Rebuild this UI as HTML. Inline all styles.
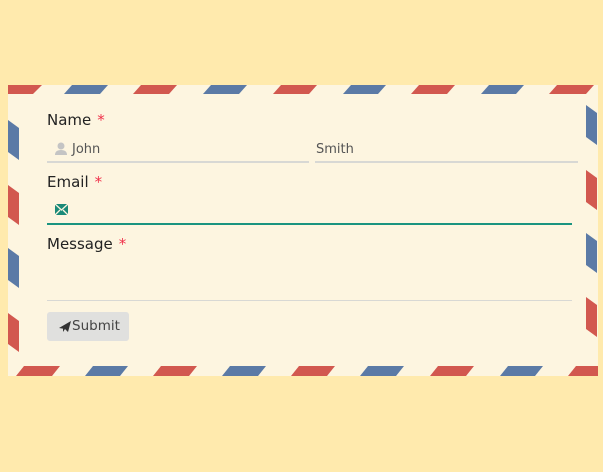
<!DOCTYPE html>
<html><head><meta charset="utf-8"><style>
*{margin:0;padding:0;box-sizing:border-box}
body{width:603px;height:472px;background:#ffeaad;position:relative;overflow:hidden;font-family:"DejaVu Sans","Liberation Sans",sans-serif}
#env{position:absolute;left:8px;top:85px;width:590px;height:291px;background:#fdf5e0}
svg.s{position:absolute;left:0;top:0}
.lbl{position:absolute;left:47px;font-size:15px;color:#222}
.lbl b{color:#f0304a;font-weight:normal;margin-left:6px}
.inp{position:absolute;font-size:13px;color:#555}
.line{position:absolute;height:1px;background:#d8d8d4}
.btn{position:absolute;left:47px;top:312px;width:82px;height:29px;background:#e0e0de;border-radius:3px;font-size:13.5px;color:#444;line-height:29px;padding-left:25px}
.btn svg{position:absolute;left:11px;top:8px}
</style></head><body>
<div id="env"></div>
<svg class="s" width="603" height="472">
<g fill="#d2584f">
<polygon points="8,85 42,85 33,94 8,94"/>
<polygon points="141,85 177,85 169,94 133,94"/>
<polygon points="281,85 317,85 309,94 273,94"/>
<polygon points="419,85 455,85 447,94 411,94"/>
<polygon points="557,85 594,85 586,94 549,94"/>
<polygon points="24,366 60,366 52,376 16,376"/>
<polygon points="161,366 197,366 189,376 153,376"/>
<polygon points="299,366 335,366 327,376 291,376"/>
<polygon points="438,366 474,366 466,376 430,376"/>
<polygon points="576,366 598,366 598,376 568,376"/>
<polygon points="8,185 19,193 19,225 8,217"/>
<polygon points="8,313 19,321 19,352 8,344"/>
<polygon points="586,170 597,178 597,210 586,202"/>
<polygon points="586,297 597,305 597,337 586,329"/>
</g>
<g fill="#5b7aa6">
<polygon points="72,85 108,85 100,94 64,94"/>
<polygon points="211,85 247,85 239,94 203,94"/>
<polygon points="351,85 386,85 378,94 343,94"/>
<polygon points="489,85 524,85 516,94 481,94"/>
<polygon points="93,366 128,366 120,376 85,376"/>
<polygon points="230,366 266,366 258,376 222,376"/>
<polygon points="368,366 404,366 396,376 360,376"/>
<polygon points="508,366 543,366 535,376 500,376"/>
<polygon points="8,120 19,128 19,160 8,152"/>
<polygon points="8,248 19,256 19,288 8,280"/>
<polygon points="586,105 597,113 597,145 586,137"/>
<polygon points="586,233 597,241 597,273 586,265"/>
</g>
<g fill="#c4c4c4"><circle cx="61" cy="146" r="3.5"/><path d="M55,155 q0,-5 6,-5 q6,0 6,5 z"/></g>
<rect x="55" y="204" width="13" height="11" fill="#1a8a78"/>
<path d="M55,204 l6.5,6 l6.5,-6 M55,215 l5,-5 M68,215 l-5,-5" stroke="#fdf5e0" stroke-width="1.3" fill="none"/>
</svg>
<div class="lbl" style="top:111px">Name<b>*</b></div>
<div class="inp" style="left:72px;top:142px">John</div>
<div class="inp" style="left:316px;top:142px">Smith</div>
<div class="line" style="left:47px;top:161px;width:262px;height:2px"></div>
<div class="line" style="left:315px;top:161px;width:263px;height:2px"></div>
<div class="lbl" style="top:173px">Email<b>*</b></div>
<div class="line" style="left:47px;top:223px;width:525px;height:2px;background:#1a9480"></div>
<div class="lbl" style="top:235px">Message<b>*</b></div>
<div class="line" style="left:47px;top:300px;width:525px"></div>
<div class="btn"><svg width="14" height="13"><path d="M1,8 L13,1 L10,12 L7,9 Z M7,9 L5,12 L5,8" fill="#333"/></svg>Submit</div>
</body></html>
